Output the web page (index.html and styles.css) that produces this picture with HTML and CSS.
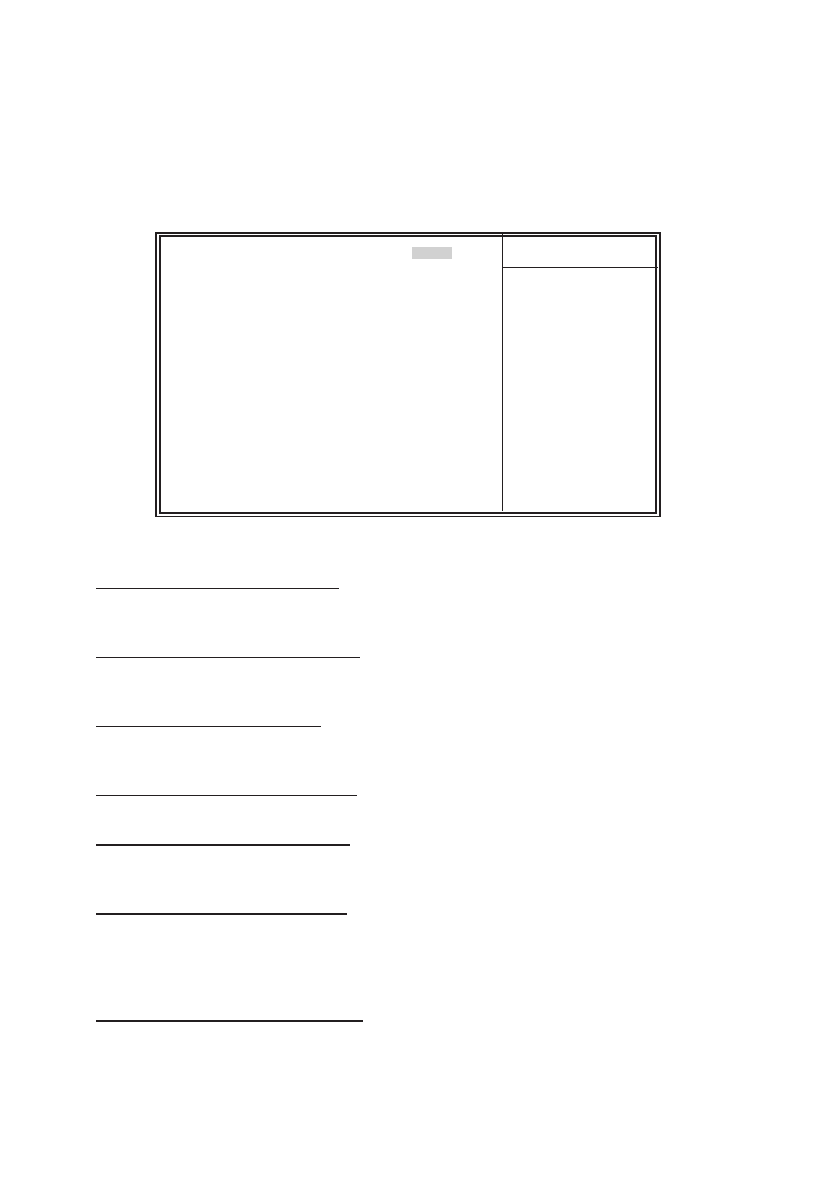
FILE: index.html
```
<!DOCTYPE html>
<html lang="en">
<head>
<meta charset="UTF-8">
<title>Setup</title>
<link rel="stylesheet" href="styles.css">
</head>
<body>

<main class="page">
    <div class="frame">
        <div class="screen">
            <div class="options">
                <div class="selected"></div>
            </div>
            <div class="side">
                <div class="side-head"></div>
            </div>
        </div>
    </div>

    <div class="items">
        <div class="item"><hr class="rule w1"></div>
        <div class="item"><hr class="rule w2"></div>
        <div class="item"><hr class="rule w3"></div>
        <div class="item short"><hr class="rule w4"></div>
        <div class="item"><hr class="rule thick w5"></div>
        <div class="item tall"><hr class="rule thick w6"></div>
        <div class="item"><hr class="rule thick w7"></div>
    </div>
</main>

</body>
</html>
```

FILE: styles.css
```
body {
    font-family: "Liberation Sans", Arial, sans-serif;
    margin: 0;
    background: #fff;
    color: #231f20;
}
.page {
    padding: 232px 96px 0;
}
/* double border of the setup screen */
.frame {
    margin: 0 82px 0 59px;
    padding: 1px 2px 2px;
    border: 2px solid #231f20;
    border-bottom-width: 1px;
}
.screen {
    display: grid;
    grid-template-columns: 1fr 153px;
    min-height: 275px;
    border: 2px solid #231f20;
}
.options {
    display: flex;
    justify-content: flex-end;
    padding: 10px 50px 0 0;
}
.selected {
    width: 40px;
    height: 12px;
    background: #d1d1d1;
}
.side {
    margin: -3px 0 1px;
    border-left: 1px solid #231f20;
}
.side-head {
    height: 33px;
    margin-right: -3px;
    border-bottom: 1px solid #231f20;
}
.items {
    padding-top: 71px;
}
.item {
    min-height: 69px;
}
.item.short {
    min-height: 49px;
}
.item.tall {
    min-height: 107px;
}
.rule {
    height: 1px;
    margin: 0;
    border: none;
    background: #231f20;
}
.rule.thick {
    height: 2px;
}
.w1 { width: 243px; }
.w2 { width: 264px; }
.w3 { width: 225px; }
.w4 { width: 261px; }
.w5 { width: 254px; }
.w6 { width: 251px; }
.w7 { width: 267px; }
```
